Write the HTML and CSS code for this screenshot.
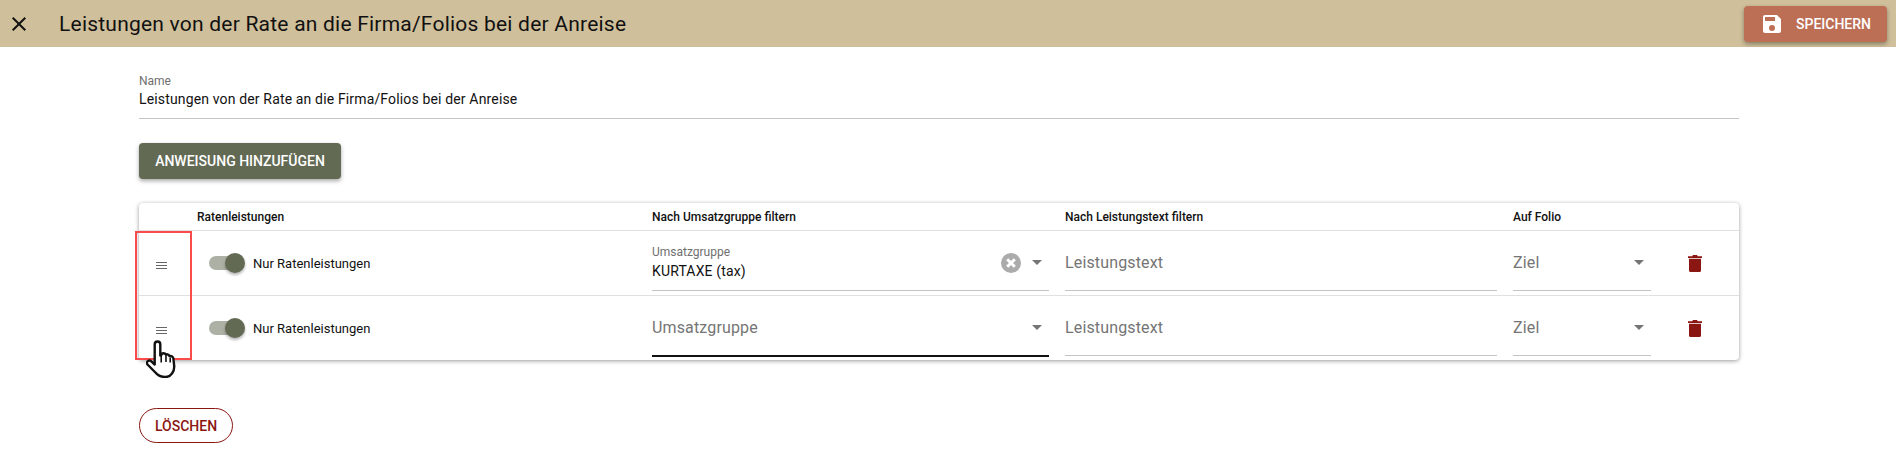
FILE: index.html
```html
<!DOCTYPE html>
<html>
<head>
  <meta charset="utf-8">
  <title>Leistungen</title>
  <link rel="stylesheet" href="styles.css">
</head>
<body>
  <header class="topbar">
    <svg class="close_icon" viewBox="0 0 24 24"><path d="M19 6.41 17.59 5 12 10.59 6.41 5 5 6.41 10.59 12 5 17.59 6.41 19 12 13.41 17.59 19 19 17.59 13.41 12z"/></svg>
    <h1 class="topbar_title">Leistungen von der Rate an die Firma/Folios bei der Anreise</h1>
    <button class="save_btn">
      <svg viewBox="3 3 18 18"><path d="M17 3H5a2 2 0 0 0-2 2v14a2 2 0 0 0 2 2h14a2 2 0 0 0 2-2V7l-4-4zm-5 16a3 3 0 1 1 0-6 3 3 0 0 1 0 6zm3-10H5V5h10v4z"/></svg>
      Speichern
    </button>
  </header>

  <main class="content">
    <div class="name_field">
      <label>Name</label>
      <div class="name_value">Leistungen von der Rate an die Firma/Folios bei der Anreise</div>
    </div>

    <button class="add_btn">Anweisung hinzufügen</button>

    <div class="card">
      <div class="row head_row">
        <div></div>
        <div>Ratenleistungen</div>
        <div>Nach Umsatzgruppe filtern</div>
        <div>Nach Leistungstext filtern</div>
        <div>Auf Folio</div>
        <div></div>
      </div>

      <div class="row">
        <div class="drag"><svg viewBox="0 0 11 7"><path d="M0 0h11v1H0zM0 3h11v1H0zM0 6h11v1H0z"/></svg></div>
        <div class="toggle_cell"><span class="toggle"></span>Nur Ratenleistungen</div>
        <div class="field">
          <div class="field_text">
            <span class="small_label">Umsatzgruppe</span>
            <span class="field_value">KURTAXE (tax)</span>
          </div>
          <svg class="clear_icon" viewBox="0 0 20 20"><circle cx="10" cy="10" r="10" fill="#ababab"/><path d="M6.200 6.200l7.600 7.600M13.800 6.200l-7.600 7.600" stroke="#fff" stroke-width="3"/></svg>
          <span class="arrow"></span>
        </div>
        <div class="field"><span class="placeholder">Leistungstext</span></div>
        <div class="field target"><span class="placeholder">Ziel</span><span class="arrow"></span></div>
        <div class="trash"><svg viewBox="0 0 14 18"><path d="M0 2.200h4.200L5 1h4l.8 1.200H14v1.700H0zM1 4.800h12V16.400a1.600 1.600 0 0 1-1.600 1.600H2.600A1.600 1.600 0 0 1 1 16.400z"/></svg></div>
      </div>

      <div class="row last_row">
        <div class="drag"><svg viewBox="0 0 11 7"><path d="M0 0h11v1H0zM0 3h11v1H0zM0 6h11v1H0z"/></svg></div>
        <div class="toggle_cell"><span class="toggle"></span>Nur Ratenleistungen</div>
        <div class="field hovered"><span class="placeholder">Umsatzgruppe</span><span class="arrow"></span></div>
        <div class="field"><span class="placeholder">Leistungstext</span></div>
        <div class="field target"><span class="placeholder">Ziel</span><span class="arrow"></span></div>
        <div class="trash"><svg viewBox="0 0 14 18"><path d="M0 2.200h4.200L5 1h4l.8 1.200H14v1.700H0zM1 4.800h12V16.400a1.600 1.600 0 0 1-1.600 1.600H2.600A1.600 1.600 0 0 1 1 16.400z"/></svg></div>
      </div>

      <div class="highlight"></div>
      <svg class="hand" viewBox="0 0 30 38">
        <path d="M11.500 1.500c1.800 0 2.800 1.300 2.800 3v11l.9-.3c.3-1.300 1.200-2 2.300-2 1.100 0 1.900.5 2.300 1.400 1.500-.7 3.200 0 3.700 1.500 1.800-.5 3.900.8 3.900 2.700l.8 7.200c.3 4.800-2.800 11-8.800 11-5 0-7.500-1.500-10-4.500L1.500 24.500c-1-1.300-.6-2.800.5-3.500 1.200-.7 2.600-.3 3.600.7l3.100 2.800V4.500c0-1.700 1-3 2.800-3z" fill="#fff" stroke="#111" stroke-width="2.400" stroke-linejoin="round"/>
        <path d="M15.200 15.500v7M20 15v7M24.200 17.500v5" fill="none" stroke="#111" stroke-width="1.600"/>
      </svg>
    </div>

    <button class="delete_btn">Löschen</button>
  </main>
</body>
</html>
```

FILE: styles.css
```css
* { box-sizing: border-box; }

body {
  margin: 0;
  height: 461px;
  overflow: hidden;
  background-color: #fff;
  color: #111;
  font-family: Roboto, "Liberation Sans", sans-serif;
}

button {
  font-family: inherit;
  text-transform: uppercase;
  border: none;
  font-weight: 500;
  font-size: 14px;
}

.topbar {
  height: 47px;
  display: flex;
  align-items: center;
  background-color: #cfbf9b;
  padding: 0 9px 0 7px;
}
.close_icon { width: 24px; height: 24px; fill: #111; }
.topbar_title {
  flex: 1;
  margin: 0 0 0 28px;
  font-size: 21px;
  font-weight: 400;
  letter-spacing: 0.22px;
}
.save_btn {
  width: 143px;
  height: 36px;
  display: flex;
  align-items: center;
  padding: 0 0 0 19px;
  gap: 15px;
  color: #fff;
  background-color: #bd6f56;
  border-radius: 4px;
  box-shadow: 0 2px 4px rgba(0,0,0,0.35);
}
.save_btn svg { width: 18px; height: 18px; fill: #fff; }

.content { padding: 27px 157px 0 139px; }

.name_field { height: 45px; border-bottom: 1px solid #c4c4c4; }
.name_field label { display: block; font-size: 12px; line-height: 14px; color: #6f6f6f; }
.name_value { font-size: 14px; line-height: 20px; margin-top: 1px; letter-spacing: 0.15px; }

.add_btn {
  display: block;
  width: 202px;
  height: 36px;
  margin-top: 24px;
  color: #fff;
  background-color: #636a54;
  border-radius: 4px;
  box-shadow: 0 2px 4px rgba(0,0,0,0.35);
}

.card {
  position: relative;
  margin-top: 24px;
  width: 1600px;
  height: 157px;
  background-color: #fff;
  border-radius: 4px;
  box-shadow: 0 1px 4px rgba(0,0,0,0.4);
}

.row {
  display: grid;
  grid-template-columns: 58px 455px 413px 448px 175px 1fr;
  align-items: center;
  height: 65px;
  border-bottom: 1px solid #e0e0e0;
}
.head_row {
  height: 28px;
  font-size: 12px;
  font-weight: 500;
}
.last_row { height: 64px; border-bottom: none; }

.drag { display: flex; padding: 4px 0 0 17px; }
.drag svg { width: 11px; height: 7px; fill: #666; }

.toggle_cell { display: flex; align-items: center; gap: 10px; font-size: 13px; }
.toggle {
  position: relative;
  width: 34px;
  height: 14px;
  margin: 0 0 0 12px;
  background-color: #adb1a5;
  border-radius: 7px;
}
.toggle:after {
  content: "";
  position: absolute;
  top: -3px;
  right: -2px;
  width: 20px;
  height: 20px;
  border-radius: 50%;
  background-color: #636a54;
  box-shadow: 0 2px 3px rgba(0,0,0,0.3);
}

.field {
  display: flex;
  align-self: start;
  align-items: center;
  justify-content: space-between;
  height: 60px;
  margin: 0 16px 0 0;
  padding: 4px 7px 0 0;
  border-bottom: 1px solid #c4c4c4;
}
.target { margin-right: 37px; }
.hovered { border-bottom: 2px solid #111; height: 61px; }
.field_text { flex: 1; display: flex; flex-direction: column; }
.small_label { font-size: 12px; line-height: 14px; color: #6f6f6f; }
.field_value { font-size: 14px; line-height: 20px; margin-top: 2px; letter-spacing: 0.15px; }
.placeholder { font-size: 16px; color: #757575; letter-spacing: 0.15px; }
.clear_icon { width: 20px; height: 20px; margin-right: 11px; }
.arrow {
  width: 0;
  height: 0;
  border-left: 5px solid transparent;
  border-right: 5px solid transparent;
  border-top: 5px solid #757575;
}

.trash { display: flex; }
.trash svg { width: 14px; height: 18px; fill: #8a1712; }

.highlight {
  position: absolute;
  left: -4px;
  top: 28px;
  width: 57px;
  height: 129px;
  border: 2px solid #fb4a4a;
}
.hand {
  position: absolute;
  left: 7px;
  top: 137px;
  width: 30px;
  height: 38px;
}

.delete_btn {
  display: block;
  width: 94px;
  height: 35px;
  margin-top: 48px;
  color: #8a1712;
  background-color: #fff;
  border: 1px solid #8a1712;
  border-radius: 18px;
}
```
